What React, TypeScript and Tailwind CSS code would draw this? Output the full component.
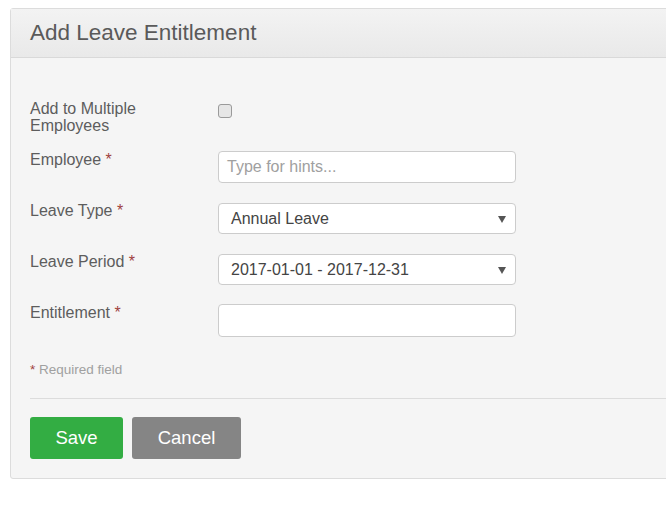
import React from "react";

const Star = () => <span className="text-[#a0413e]"> *</span>;

const Arrow = () => (
  <svg width="8" height="7" viewBox="0 0 8 7" className="absolute right-[9px] top-[12px]">
    <path d="M0 0 L8 0 L4 7 Z" fill="#555" />
  </svg>
);

export default function App() {
  return (
    <div
      className="w-[666px] h-[505px] overflow-hidden bg-white pt-[8px] pl-[10px]"
      style={{ fontFamily: '"Liberation Sans", Arial, sans-serif' }}
    >
      <div className="w-[700px] border border-[#dcdcdc] rounded-[3px] bg-[#f5f5f5]">
        <div className="h-[49px] border-b border-[#d9d9d9] bg-gradient-to-b from-[#f3f3f3] to-[#e9e9e9] pl-[19px] flex items-center">
          <h1 className="text-[22.5px] text-[#5a5a5a] leading-none pt-[1px]">Add Leave Entitlement</h1>
        </div>
        <div className="pl-[19px] pt-[40px]">
          <div className="flex mb-[17px]">
            <div className="w-[188px] text-[16px] leading-[17px] text-[#5d5d5d] pt-[2px]">
              Add to Multiple
              <br />
              Employees
            </div>
            <div className="pt-[6px]">
              <div className="w-[14px] h-[14px] rounded-[3px] border border-[#9a9a9a] bg-[#e6e6e6]" />
            </div>
          </div>

          <div className="flex mb-[20px]">
            <div className="w-[188px] text-[16px] leading-[17px] text-[#5d5d5d]">
              Employee<Star />
            </div>
            <div className="w-[298px] h-[32px] rounded-[4px] border border-[#cccccc] bg-white px-[8px] flex items-center text-[16px] text-[#a0a0a0]">
              Type for hints...
            </div>
          </div>

          <div className="flex mb-[20px]">
            <div className="w-[188px] text-[16px] leading-[17px] text-[#5d5d5d] -mt-[1px]">
              Leave Type<Star />
            </div>
            <div className="relative w-[298px] h-[31px] rounded-[4px] border border-[#cccccc] bg-white pl-[12px] flex items-center text-[16px] text-[#444]">
              Annual Leave
              <Arrow />
            </div>
          </div>

          <div className="flex mb-[19px]">
            <div className="w-[188px] text-[16px] leading-[17px] text-[#5d5d5d] -mt-[1px]">
              Leave Period<Star />
            </div>
            <div className="relative w-[298px] h-[31px] rounded-[4px] border border-[#cccccc] bg-white pl-[12px] flex items-center text-[16px] text-[#444]">
              2017-01-01 - 2017-12-31
              <Arrow />
            </div>
          </div>

          <div className="flex">
            <div className="w-[188px] text-[16px] leading-[17px] text-[#5d5d5d]">
              Entitlement<Star />
            </div>
            <div className="w-[298px] h-[33px] rounded-[4px] border border-[#cccccc] bg-white" />
          </div>

          <div className="mt-[25px] text-[13.5px] leading-[16px] text-[#a0a0a0]">
            <span className="text-[#a0413e]">*</span> Required field
          </div>

          <div className="mt-[20px] border-t border-[#dcdcdc]" />

          <div className="flex gap-[9px] pt-[18px] pb-[19px]">
            <button className="w-[93px] h-[42px] rounded-[3px] bg-[#33ad43] text-white text-[18.5px]">Save</button>
            <button className="w-[109px] h-[42px] rounded-[3px] bg-[#858585] text-white text-[18.5px]">Cancel</button>
          </div>
        </div>
      </div>
    </div>
  );
}
